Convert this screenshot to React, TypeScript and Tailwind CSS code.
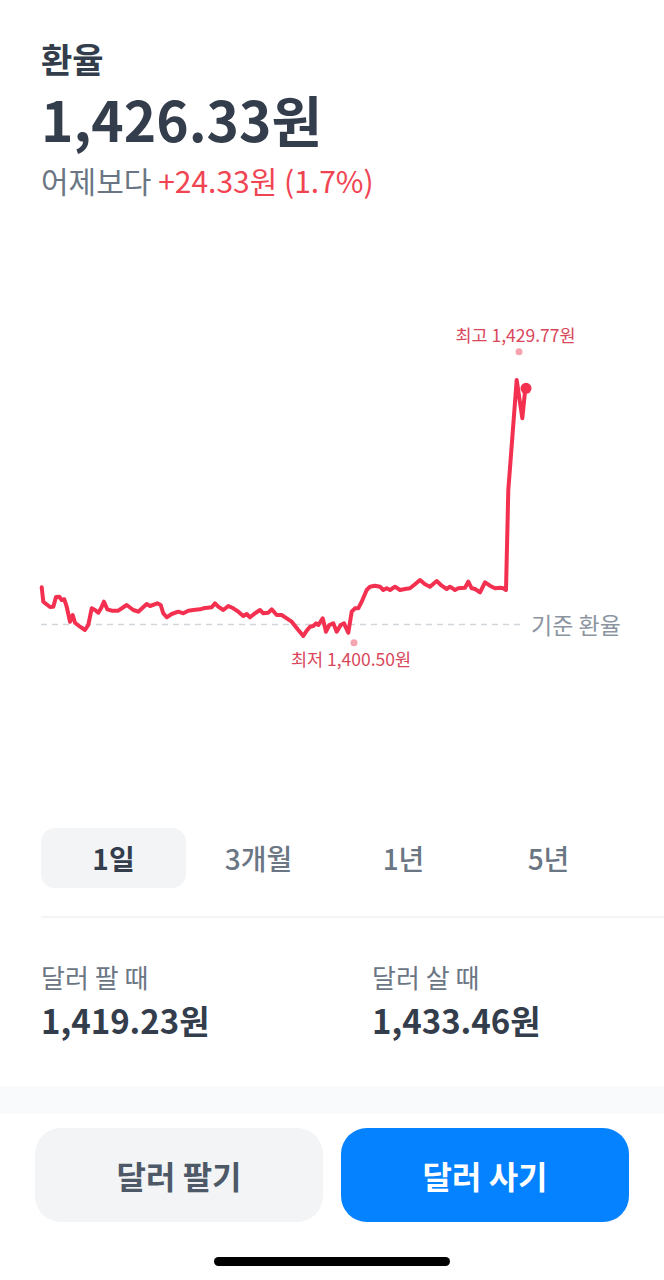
import React from "react";

const pts = `41.7,587.3 43.3,601.7 50,607 53.3,606.7 56,597 59.3,596.7 61.7,600 64.3,599.3 66.7,606.7 70,621.7 72.7,615 75,622.7 80,626.7 85,630 88.3,625 91.7,608.3 95,610 98.3,612.7 101,608.3 104,601.7 107.3,609.3 111.7,610.7 118.3,610.7 126.7,605 133.3,610 138.3,611.7 146.7,604 150,606 157.3,603.3 160.7,605 163.3,613.3 166.7,617.3 171.7,614 178.3,611.7 183.3,613.3 188.3,610.7 193.3,610 200,609.3 203.3,608.3 211.7,607.3 215,603.3 218.3,606.7 223.3,610 228.3,606 233.3,608.3 238.3,611.7 243.3,616 246.7,614 250,617.3 255,613.3 260,610 263.3,613.3 268.3,612.7 271.7,609.3 276.7,615 281.7,615 286.7,618.3 291.7,621.7 298.3,630 303.3,636 306.7,630.7 310,626.7 313.3,626 316,623.3 318.3,625 322.7,618.3 326,631.7 329.3,625 333.3,623.3 336.7,631.7 340.7,625 344,623.3 348.3,632.7 351.7,611.7 355,608.3 358.3,608.3 361.7,601.7 366.7,590 370,586.7 375,585.7 380,586.7 383.3,590 386.7,588.3 390,590 395,586.7 400,590 405,589 410,588.3 415,584.3 420,580 425,584.3 430,586.7 436.7,581 441.7,585.7 446.7,589 450,586.7 455,590 458.3,588.3 465,587.7 468.3,581.7 471.7,588.3 475,589 480,592.3 485,582.3 490,585.7 495,588.3 500,587.7 503.3,588.3 506,590 508.3,490 516.7,380 522.3,418.3 525,391.7`;

const font = '"Noto Sans CJK KR", "Noto Sans", sans-serif';

function Chart() {
  return (
    <svg width="664" height="628" viewBox="0 200 664 628" className="block">
      <line x1="41" y1="624.5" x2="522" y2="624.5" stroke="#d1d6db" strokeWidth="1.5" strokeDasharray="6 5" />
      <polyline points={pts} fill="none" stroke="#f3304f" strokeWidth="4" strokeLinejoin="round" strokeLinecap="round" />
      <circle cx="526" cy="388.3" r="5.5" fill="#f3304f" />
      <circle cx="519" cy="351.7" r="3.5" fill="#f5a3ae" />
      <circle cx="354" cy="642.7" r="3.5" fill="#f5a3ae" />
      <text x="515.5" y="342" textAnchor="middle" fontSize="17.5" fill="#d9475a" style={{ fontFamily: font }}>최고 1,429.77원</text>
      <text x="351" y="666" textAnchor="middle" fontSize="17.5" fill="#d9475a" style={{ fontFamily: font }}>최저 1,400.50원</text>
      <text x="531" y="634" fontSize="23" fill="#8b95a1" style={{ fontFamily: font }}>기준 환율</text>
    </svg>
  );
}

export default function App() {
  const tabs = ["1일", "3개월", "1년", "5년"];
  return (
    <div className="w-[664px] h-[1280px] bg-white overflow-hidden flex flex-col" style={{ fontFamily: font }}>
      <div className="h-[200px] px-[41px] pt-[39px] flex flex-col">
        <div className="text-[34px] leading-[40px] font-bold text-[#333d4b]">환율</div>
        <div className="mt-[8px] text-[55px] leading-[62px] font-bold text-[#333d4b]">1,426.33원</div>
        <div className="mt-[13px] text-[30px] leading-[36px] text-[#6b7684]">
          어제보다 <span className="text-[#f04452]">+24.33원 (1.7%)</span>
        </div>
      </div>
      <Chart />
      <div className="ml-[41px] grid grid-cols-4 w-[580px] h-[60px]">
        {tabs.map((t, i) => (
          <div
            key={t}
            className={
              i === 0
                ? "flex items-center justify-center rounded-[14px] bg-[#f2f4f6] text-[28px] font-bold text-[#333d4b]"
                : "flex items-center justify-center text-[28px] font-medium text-[#6b7684]"
            }
          >
            {t}
          </div>
        ))}
      </div>
      <div className="mt-[28px] ml-[41px] border-t-2 border-[#f2f4f6]" />
      <div className="flex px-[41px] pt-[43px]">
        <div className="w-[331px] flex flex-col">
          <div className="text-[26px] leading-[32px] text-[#6b7684]">달러 팔 때</div>
          <div className="mt-[6px] text-[33px] leading-[42px] font-bold text-[#333d4b]">1,419.23원</div>
        </div>
        <div className="flex flex-col">
          <div className="text-[26px] leading-[32px] text-[#6b7684]">달러 살 때</div>
          <div className="mt-[6px] text-[33px] leading-[42px] font-bold text-[#333d4b]">1,433.46원</div>
        </div>
      </div>
      <div className="mt-auto" />
      <div className="h-[28px] bg-[#f9fafb]" />
      <div className="flex gap-[18px] px-[35px] pt-[14px]">
        <button className="flex-1 h-[94px] rounded-[26px] bg-[#f2f4f6] text-[32px] font-bold text-[#4e5968] flex items-center justify-center">
          달러 팔기
        </button>
        <button className="flex-1 h-[94px] rounded-[26px] bg-[#0582ff] text-[32px] font-bold text-white flex items-center justify-center">
          달러 사기
        </button>
      </div>
      <div className="flex justify-center pt-[35px] pb-[14px]">
        <div className="w-[236px] h-[9px] rounded-full bg-black" />
      </div>
    </div>
  );
}
